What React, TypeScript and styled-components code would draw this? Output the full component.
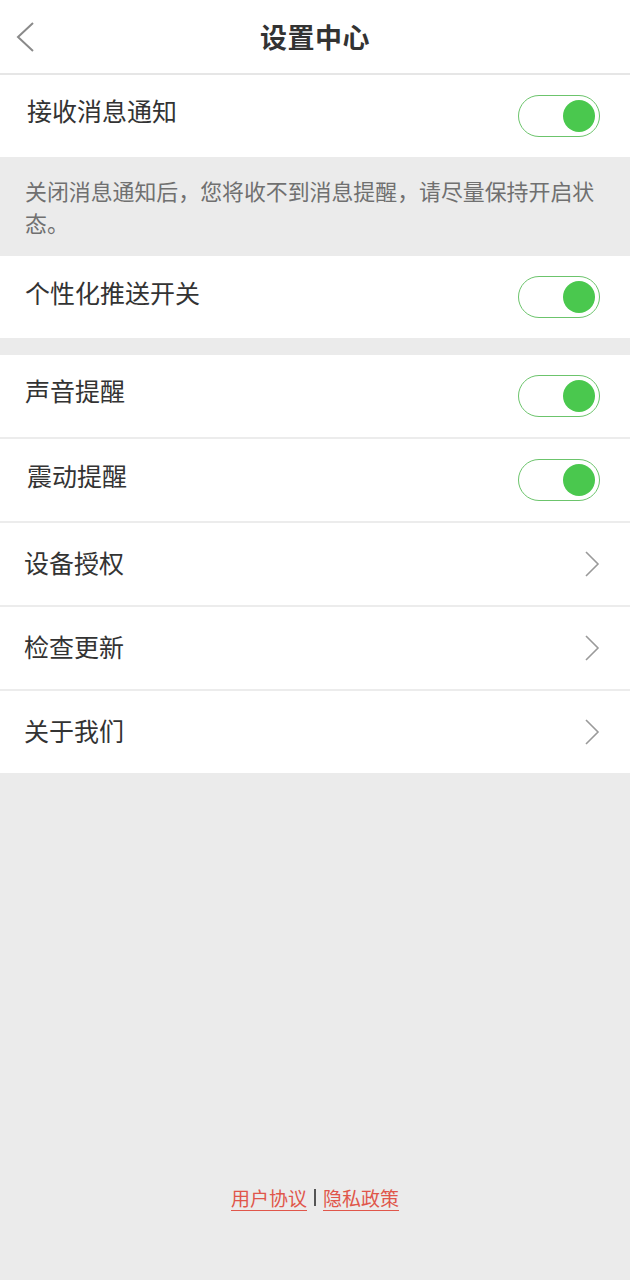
import React from "react";
import styled, { createGlobalStyle } from "styled-components";

const Global = createGlobalStyle`
  html, body { margin: 0; padding: 0; background: #ebebeb; }
  body { font-family: "Noto Sans CJK SC", "Noto Sans", sans-serif; color: #333; }
`;

const Page = styled.div`
  width: 630px;
  min-height: 1280px;
  background: #ebebeb;
  display: flex;
  flex-direction: column;
`;

const Header = styled.header`
  height: 73px;
  background: #fff;
  border-bottom: 2px solid #e6e6e6;
  display: flex;
  align-items: center;
  justify-content: center;
  position: relative;
`;

const BackBtn = styled.div`
  position: absolute;
  left: 14px;
  top: 21px;
  width: 22px;
  height: 32px;
  display: flex;
`;

const Title = styled.h1`
  margin: 0;
  font-size: 27px;
  font-weight: 700;
  color: #333;
  letter-spacing: 0.5px;
`;

const Row = styled.div<{ $indent?: number; $divider?: boolean }>`
  height: 82px;
  background: #fff;
  display: flex;
  align-items: center;
  justify-content: space-between;
  padding-left: ${(p) => p.$indent ?? 25}px;
  padding-right: 30px;
  border-top: ${(p) => (p.$divider ? "2px solid #ececec" : "none")};
`;

const Label = styled.span<{ $lift?: number }>`
  font-size: 25px;
  color: #333;
  transform: translateY(${(p) => -(p.$lift ?? 0)}px);
`;

const Notice = styled.div`
  background: #ebebeb;
  padding: 18px 26px 16px 25px;
  font-size: 21.9px;
  line-height: 32px;
  color: #707070;
  height: 99px;
  box-sizing: border-box;
`;

const Gap = styled.div`
  height: 17px;
`;

const Track = styled.div`
  width: 82px;
  height: 42px;
  box-sizing: border-box;
  border: 1.5px solid #6cc46c;
  border-radius: 21px;
  display: flex;
  align-items: center;
  justify-content: flex-end;
  padding-right: 4px;
  background: #fff;
`;

const Knob = styled.div`
  width: 32px;
  height: 32px;
  border-radius: 50%;
  background: #4ac84e;
`;

const Spacer = styled.div`
  flex: 1;
`;

const Footer = styled.div`
  height: 96px;
  display: flex;
  justify-content: center;
  align-items: flex-start;
  gap: 7px;
  font-size: 19px;
`;

const Link = styled.a`
  color: #e0564a;
  text-decoration: underline;
  text-underline-offset: 4px;
  text-decoration-thickness: 1px;
`;

const Sep = styled.span`
  display: inline-block;
  width: 2px;
  height: 17px;
  background: #555;
  margin-top: 5px;
`;

const Toggle = () => (
  <Track>
    <Knob />
  </Track>
);

const Chevron = () => (
  <svg width="16" height="26" viewBox="0 0 16 26">
    <polyline points="2,1 14,13 2,25" fill="none" stroke="#9a9a9a" strokeWidth="1.6" />
  </svg>
);

export default function App() {
  return (
    <Page>
      <Global />
      <Header>
        <BackBtn>
          <svg width="22" height="32" viewBox="0 0 22 32">
            <polyline points="19,2 4,16 19,30" fill="none" stroke="#8a8a8a" strokeWidth="2" />
          </svg>
        </BackBtn>
        <Title>设置中心</Title>
      </Header>
      <Row $indent={27}>
        <Label $lift={6}>接收消息通知</Label>
        <Toggle />
      </Row>
      <Notice>关闭消息通知后，您将收不到消息提醒，请尽量保持开启状态。</Notice>
      <Row>
        <Label $lift={5}>个性化推送开关</Label>
        <Toggle />
      </Row>
      <Gap />
      <Row>
        <Label $lift={6}>声音提醒</Label>
        <Toggle />
      </Row>
      <Row $indent={27} $divider>
        <Label $lift={5}>震动提醒</Label>
        <Toggle />
      </Row>
      <Row $indent={24} $divider>
        <Label $lift={2}>设备授权</Label>
        <Chevron />
      </Row>
      <Row $indent={24} $divider>
        <Label $lift={2}>检查更新</Label>
        <Chevron />
      </Row>
      <Row $indent={24} $divider>
        <Label $lift={2}>关于我们</Label>
        <Chevron />
      </Row>
      <Spacer />
      <Footer>
        <Link>用户协议</Link>
        <Sep />
        <Link>隐私政策</Link>
      </Footer>
    </Page>
  );
}
